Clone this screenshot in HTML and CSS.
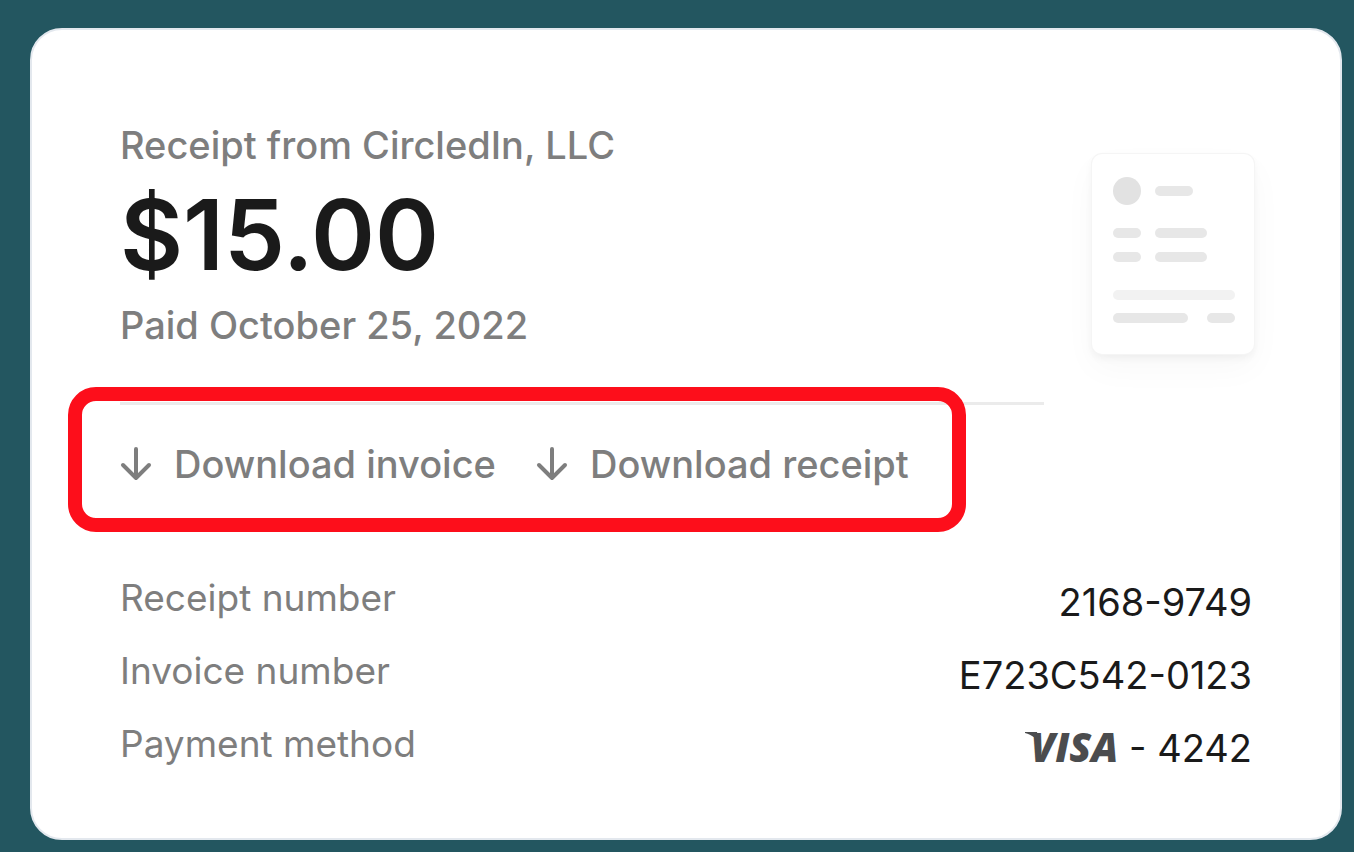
FILE: index.html
```html
<!DOCTYPE html>
<html lang="en">
<head>
  <meta charset="UTF-8" />
  <meta name="viewport" content="width=device-width, initial-scale=1.0"/>
  <title>Receipt from CircledIn, LLC</title>
  <link rel="stylesheet" href="styles.css">
</head>
<body>

<main class="card">
  <div class="top">
    <div class="summary">
      <p class="muted">Receipt from CircledIn, LLC</p>
      <h1 class="amount">$15.00</h1>
      <p class="muted">Paid October 25, 2022</p>

      <div class="actions">
        <div class="downloads">
          <a class="download" href="#">
            <svg class="arrow" viewBox="0 0 32 34" aria-hidden="true">
              <path d="M16 2v29M3 18l13 13 13-13"/>
            </svg>
            Download invoice
          </a>
          <a class="download" href="#">
            <svg class="arrow" viewBox="0 0 32 34" aria-hidden="true">
              <path d="M16 2v29M3 18l13 13 13-13"/>
            </svg>
            Download receipt
          </a>
        </div>
      </div>
    </div>

    <div class="paper">
      <svg viewBox="0 0 162 200" aria-hidden="true">
        <circle cx="35" cy="37" r="14" fill="#e2e2e2"/>
        <g fill="#e7e7e7">
          <rect x="63" y="32" width="38" height="10" rx="5"/>
          <rect x="21" y="74" width="28" height="10" rx="5"/>
          <rect x="63" y="74" width="52" height="10" rx="5"/>
          <rect x="21" y="98" width="28" height="10" rx="5"/>
          <rect x="63" y="98" width="52" height="10" rx="5"/>
          <rect x="21" y="136" width="122" height="10" rx="5" fill="#f2f2f2"/>
          <rect x="21" y="159" width="75" height="10" rx="5"/>
          <rect x="115" y="159" width="28" height="10" rx="5"/>
        </g>
      </svg>
    </div>
  </div>

  <dl class="details">
    <div class="row">
      <dt>Receipt number</dt>
      <dd>2168-9749</dd>
    </div>
    <div class="row">
      <dt>Invoice number</dt>
      <dd>E723C542-0123</dd>
    </div>
    <div class="row">
      <dt>Payment method</dt>
      <dd>
        <span class="visa">VISA<svg class="flick" viewBox="0 0 16 14" aria-hidden="true"><path d="M0 0h12l3 14C12 6 7 3 0 1z"/></svg></span>
        - 4242
      </dd>
    </div>
  </dl>
</main>

</body>
</html>
```
FILE: styles.css
```css
* {
  box-sizing: border-box;
}
body {
  font-family: Inter, "Liberation Sans", sans-serif;
  font-size: 38px;
  line-height: 48px;
  background: #235660;
  color: #1a1a1a;
  margin: 0;
  padding: 28px 12px 12px 30px;
}
.card {
  background: white;
  padding: 91px 88px 66px;
  border: 2px solid #e3e8ee;
  border-radius: 32px;
}
.top {
  display: flex;
  gap: 48px;
  margin-right: -2px;
}
.summary {
  flex: 1;
}
.muted {
  margin: 0;
  color: #7e7e7e;
  font-weight: 500;
}
.amount {
  margin: 6px 0;
  font-size: 97px;
  line-height: 120px;
  font-weight: 600;
}
.actions {
  margin-top: 53px;
  padding-top: 35px;
  border-top: 3px solid #ebebeb;
}
.downloads {
  display: inline-flex;
  gap: 40px;
  position: relative;
  vertical-align: top;
}
/* red outline round both download links */
.downloads::after {
  content: "";
  position: absolute;
  inset: -53px -57px -44px -52px;
  border: 14px solid #fd0e1b;
  border-radius: 28px;
  pointer-events: none;
}
.download {
  display: flex;
  align-items: center;
  gap: 22px;
  color: #7e7e7e;
  font-weight: 500;
  text-decoration: none;
}
.arrow {
  width: 32px;
  height: 34px;
  fill: none;
  stroke: #7e7e7e;
  stroke-width: 4;
  stroke-linecap: round;
  stroke-linejoin: round;
}
.paper {
  align-self: flex-start;
  width: 162px;
  margin-top: 33px;
  border-radius: 10px;
  background: white;
  box-shadow: 0 0 0 1px #f5f5f5, 0 4px 8px rgba(0,0,0,0.05), 0 14px 34px rgba(0,0,0,0.03);
}
.paper svg {
  display: block;
  width: 100%;
}
.details {
  margin: 86px 0 0;
  display: grid;
  gap: 21px;
}
.row {
  display: flex;
  justify-content: space-between;
}
dt {
  color: #7e7e7e;
  font-size: 37px;
}
dd {
  margin: 0;
  padding-top: 4px;
}
.visa {
  position: relative;
  font-family: "Open Sans", sans-serif;
  font-size: 40px;
  line-height: 40px;
  font-weight: 800;
  font-style: italic;
  color: #4b4c4e;
}
/* serif on the left of the V */
.flick {
  position: absolute;
  left: -6px;
  top: 13px;
  width: 16px;
  height: 14px;
  fill: #4b4c4e;
}
```
